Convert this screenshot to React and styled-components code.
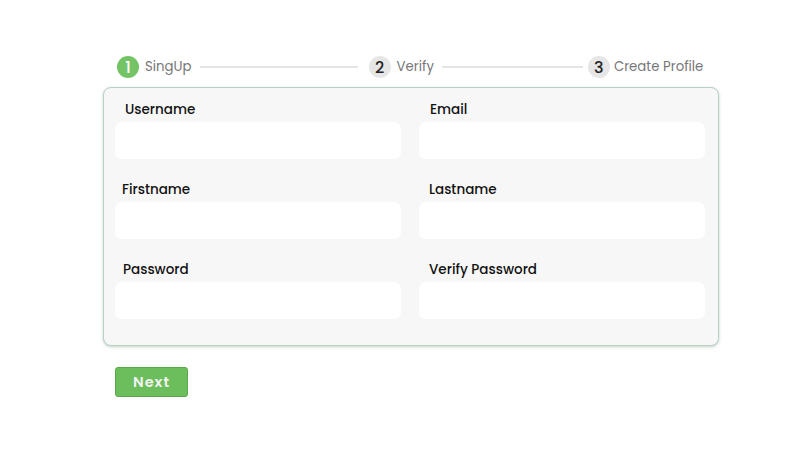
import React from 'react';
import styled, { createGlobalStyle } from 'styled-components';

const GlobalStyle = createGlobalStyle`
  html, body {
    margin: 0;
    padding: 0;
    background: #ffffff;
    font-family: 'Poppins', Inter, 'Noto Sans', sans-serif;
  }
`;

const Page = styled.div`
  width: 806px;
  height: 453px;
  padding: 55px 0 0 103px;
  box-sizing: border-box;
`;

const Wrapper = styled.div`
  width: 616px;
`;

const Steps = styled.div`
  display: flex;
  align-items: center;
  padding-left: 14px;
  height: 24px;
`;

const Step = styled.div`
  display: flex;
  align-items: center;
  gap: ${(p) => p.gap || 6}px;
  flex-shrink: 0;
`;

const StepNumber = styled.span`
  width: 22px;
  height: 22px;
  border-radius: 50%;
  display: flex;
  align-items: center;
  justify-content: center;
  font-size: 16px;
  font-weight: 500;
  background: ${(p) => (p.active ? '#74c466' : '#e6e6e6')};
  color: ${(p) => (p.active ? '#ffffff' : '#222222')};
`;

const StepLabel = styled.span`
  font-size: 13.3px;
  color: #777777;
`;

const StepLine = styled.div`
  width: ${(p) => p.length}px;
  flex-shrink: 0;
  height: 2px;
  background: #e4e4e4;
  margin: 0 ${(p) => p.after}px 0 8px;
`;

const Card = styled.div`
  margin-top: 8px;
  background: #f7f7f7;
  border: 1.5px solid #b7d1c3;
  border-radius: 8px;
  box-shadow: 0 1px 3px rgba(120, 150, 135, 0.45);
  padding: 14px 14px 26px 11px;
  display: grid;
  grid-template-columns: 286px 286px;
  column-gap: 18px;
  row-gap: 23px;
`;

const Field = styled.div`
  display: flex;
  flex-direction: column;
  gap: 4px;
`;

const Label = styled.label`
  font-size: 13.5px;
  font-weight: 500;
  color: #111111;
  padding-left: ${(p) => p.indent}px;
  line-height: 16px;
`;

const Input = styled.input`
  height: 37px;
  border: none;
  border-radius: 7px;
  background: #ffffff;
  outline: none;
  padding: 0 10px;
  box-sizing: border-box;
  font: inherit;
`;

const NextButton = styled.button`
  margin: 21px 0 0 12px;
  width: 73px;
  height: 30px;
  border: 1px solid #5aa84c;
  border-radius: 3px;
  background: #6cbd5c;
  color: #f2f2f2;
  font-family: inherit;
  font-size: 14.5px;
  font-weight: 600;
  letter-spacing: 1px;
  cursor: pointer;
`;

const fields = [
  { label: 'Username', indent: 10 },
  { label: 'Email', indent: 11 },
  { label: 'Firstname', indent: 7 },
  { label: 'Lastname', indent: 10 },
  { label: 'Password', indent: 8 },
  { label: 'Verify Password', indent: 10 },
];

export default function App() {
  return (
    <>
      <GlobalStyle />
      <Page>
        <Wrapper>
          <Steps>
            <Step>
              <StepNumber active>1</StepNumber>
              <StepLabel>SingUp</StepLabel>
            </Step>
            <StepLine length={158} after={11} />
            <Step>
              <StepNumber>2</StepNumber>
              <StepLabel>Verify</StepLabel>
            </Step>
            <StepLine length={141} after={5} />
            <Step gap={4}>
              <StepNumber>3</StepNumber>
              <StepLabel>Create Profile</StepLabel>
            </Step>
          </Steps>
          <Card>
            {fields.map((f) => (
              <Field key={f.label}>
                <Label indent={f.indent}>{f.label}</Label>
                <Input type={f.label.includes('Password') ? 'password' : 'text'} />
              </Field>
            ))}
          </Card>
          <NextButton type="button">Next</NextButton>
        </Wrapper>
      </Page>
    </>
  );
}
